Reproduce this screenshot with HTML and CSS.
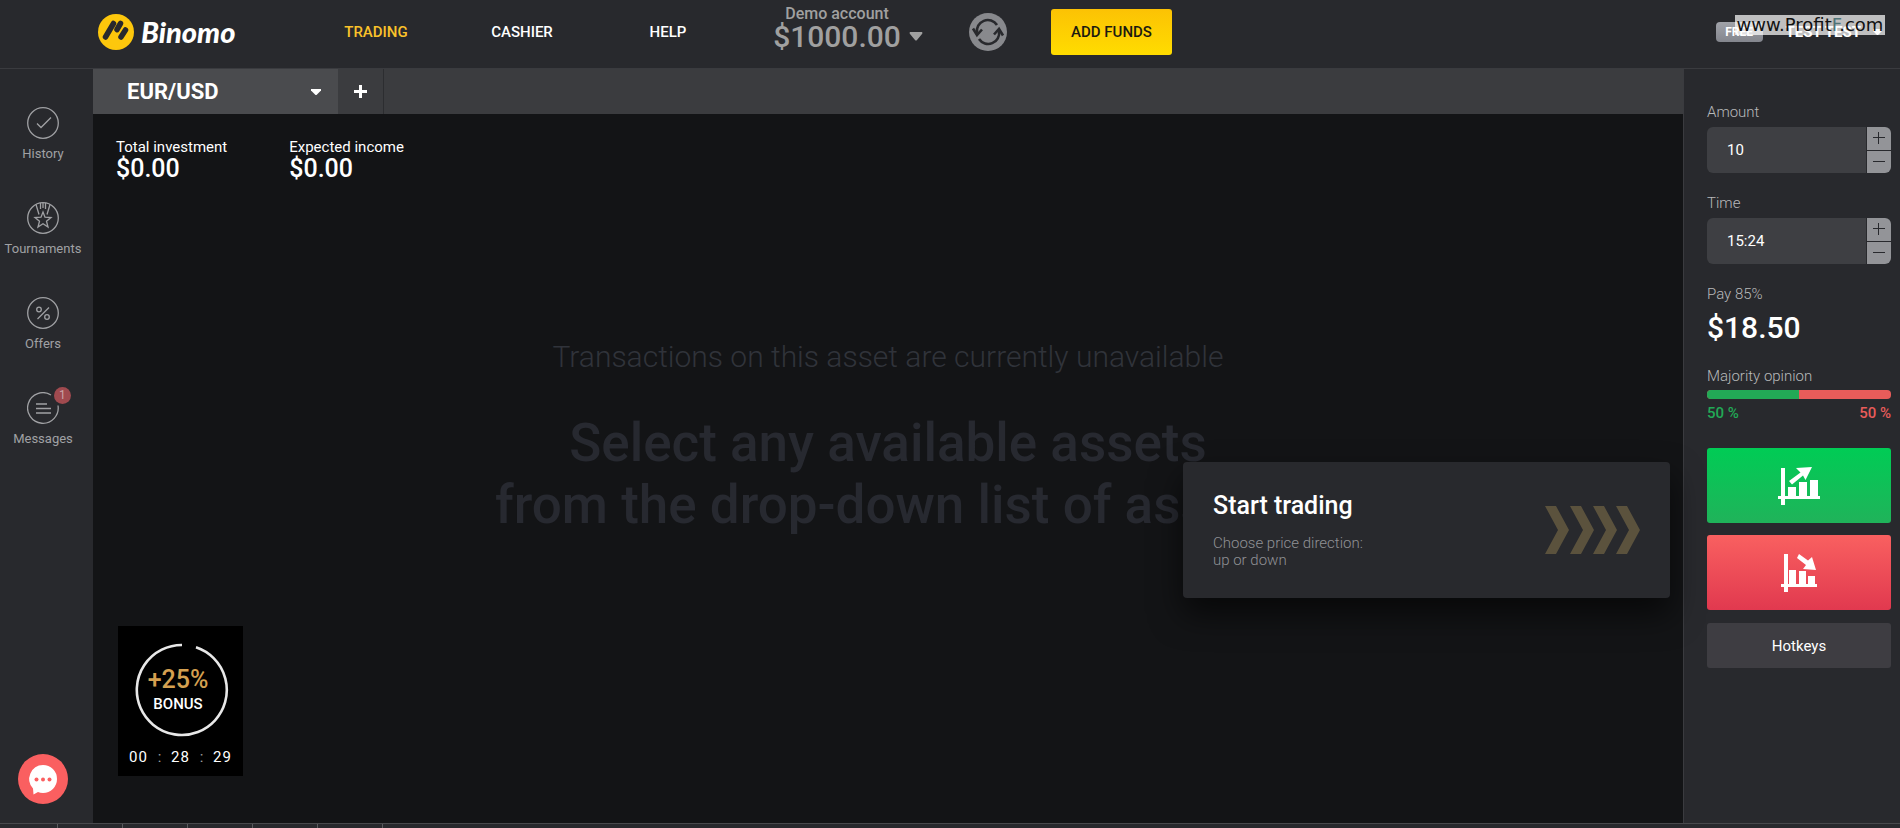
FILE: index.html
```html
<!DOCTYPE html>
<html lang="en">
<head>
    <meta charset="UTF-8">
    <meta name="viewport" content="width=device-width, initial-scale=1.0">
    <title>Binomo</title>
    <link rel="stylesheet" href="styles.css">
</head>
<body>
    <header class="header">
        <a class="logo" href="#">
            <svg width="36" height="36" viewBox="0 0 36 36">
                <circle cx="18" cy="18" r="18" fill="#fdc70c"/>
                <g stroke="#28292d" stroke-width="5.500" stroke-linecap="round">
                    <path d="M7.500 23L15.500 9.500"/>
                    <path d="M19 15.500L22.500 9.500"/>
                    <path d="M23 23L27.500 16"/>
                </g>
            </svg>
            <span>Binomo</span>
        </a>
        <nav class="nav">
            <a class="active" href="#">TRADING</a>
            <a href="#">CASHIER</a>
            <a href="#">HELP</a>
        </nav>
        <button class="account">
            <span class="account-name">Demo account</span>
            <span class="account-sum">$1000.00</span>
            <svg class="account-caret" width="14" height="9" viewBox="0 0 14 9"><path d="M1 0h12q1 1 0 2L8 8q-1 1-2 0L1 2q-1-1 0-2z" fill="#a0a0a0"/></svg>
        </button>
        <button class="sync" aria-label="Refresh balance">
            <svg width="38" height="38" viewBox="0 0 38 38">
                <circle cx="19" cy="19" r="19" fill="#88898d"/>
                <g fill="none" stroke="#28292d" stroke-width="2.600">
                    <path d="M8 20A11 11 0 0 1 28 12"/>
                    <path d="M30 18A11 11 0 0 1 10 26"/>
                    <path d="M4 15.500L8 22L13 16.500"/>
                    <path d="M34 22.500L30 16L25 21.500"/>
                </g>
            </svg>
        </button>
        <button class="add-funds">ADD FUNDS</button>
        <div class="user">
            <span class="badge">FREE</span>
            <button class="user-name">TEST TEST
                <svg width="9" height="6" viewBox="0 0 9 6"><path d="M0 0h9v2L5 6H4L0 2z" fill="#fff"/></svg>
            </button>
            <div class="watermark">www.Profit<b>F</b>.com</div>
        </div>
    </header>

    <div class="layout">
        <aside class="sidebar">
            <a class="side-item" href="#">
                <svg width="32" height="32" viewBox="0 0 32 32"><circle cx="16" cy="16" r="15.300"/><path d="M10 16.500l4 4 10-10"/></svg>
                History
            </a>
            <a class="side-item" href="#">
                <svg width="32" height="32" viewBox="0 0 32 32"><circle cx="16" cy="16" r="15.300"/><path d="M16 10l2 5.200 6 .3-4.500 3.700 1.500 5.800-5-3.300-5 3.300 1.500-5.800L8 15.500l6-.3zM9 2.500l3 10M23 2.500l-3 10M13.500 1v6M16 1v5M18.500 1v6"/></svg>
                Tournaments
            </a>
            <a class="side-item" href="#">
                <svg width="32" height="32" viewBox="0 0 32 32"><circle cx="16" cy="16" r="15.300"/><circle cx="12" cy="12.500" r="2.300"/><circle cx="20" cy="20" r="2.300"/><path d="M22 10.500L10.500 22"/></svg>
                Offers
            </a>
            <a class="side-item" href="#">
                <svg width="32" height="32" viewBox="0 0 32 32"><path d="M24 3a15.300 15.300 0 1 0 7 10.500M9 12h11M9 16.500h15M9 21h15"/></svg>
                <span class="count">1</span>
                Messages
            </a>
            <button class="chat" aria-label="Support chat">
                <svg width="50" height="50" viewBox="0 0 50 50">
                    <path d="M25 11a14 14 0 0 1 0 28q-3 0-5-1l-4.500 2.500-.5-6A14 14 0 0 1 25 11z" fill="#fff"/>
                    <g fill="#fa5f60"><circle cx="18.500" cy="25.500" r="2"/><circle cx="25" cy="25.500" r="2"/><circle cx="31.500" cy="25.500" r="2"/></g>
                </svg>
            </button>
        </aside>

        <main class="main">
            <div class="tabs">
                <button class="tab">EUR/USD
                    <svg width="10" height="6" viewBox="0 0 10 6"><path d="M0 0h10v1.500L5.500 6h-1L0 1.500z" fill="#fff"/></svg>
                </button>
                <button class="tab-add" aria-label="Add asset">
                    <svg width="13" height="13" viewBox="0 0 13 13"><path d="M5 0h3v5h5v3H8v5H5V8H0V5h5z" fill="#fff"/></svg>
                </button>
            </div>
            <div class="chart">
                <div class="stats">
                    <div class="stat">Total investment<strong>$0.00</strong></div>
                    <div class="stat">Expected income<strong>$0.00</strong></div>
                </div>
                <div class="message">
                    <p>Transactions on this asset are currently unavailable</p>
                    <h1>Select any available assets<br>from the drop-down list of assets</h1>
                </div>
                <div class="bonus">
                    <div class="ring">
                        <svg width="94" height="94" viewBox="0 0 94 94"><path d="M61 4.300A45 45 0 1 1 47 2" fill="none" stroke="#e8e8e8" stroke-width="2.600"/></svg>
                        <div class="ring-text"><span>+25%</span>BONUS</div>
                    </div>
                    <div class="timer"><span>00</span><i>:</i><span>28</span><i>:</i><span>29</span></div>
                </div>
                <div class="hint">
                    <div>
                        <h2>Start trading</h2>
                        <p>Choose price direction:<br>up or down</p>
                    </div>
                    <svg width="96" height="48" viewBox="0 0 96 48" fill="#5b523d">
                        <path d="M0 0h11l13 24-13 24H0l13-24z"/>
                        <path d="M25 0h11l13 24-13 24H25l13-24z"/>
                        <path d="M48 0h11l13 24-13 24H48l13-24z"/>
                        <path d="M71 0h11l13 24-13 24H71l13-24z"/>
                    </svg>
                </div>
            </div>
        </main>

        <aside class="deal">
            <label for="amount">Amount</label>
            <div class="field">
                <input type="text" id="amount" value="10">
                <div class="steps">
                    <button aria-label="Increase amount"><svg width="12" height="12"><path d="M0 5.500h12M5.500 0v12"/></svg></button>
                    <button aria-label="Decrease amount"><svg width="12" height="12"><path d="M0 5.500h12"/></svg></button>
                </div>
            </div>
            <label for="time">Time</label>
            <div class="field">
                <input type="text" id="time" value="15:24">
                <div class="steps">
                    <button aria-label="Increase time"><svg width="12" height="12"><path d="M0 5.500h12M5.500 0v12"/></svg></button>
                    <button aria-label="Decrease time"><svg width="12" height="12"><path d="M0 5.500h12"/></svg></button>
                </div>
            </div>
            <div class="caption">Pay 85%</div>
            <div class="payout">$18.50</div>
            <div class="caption">Majority opinion</div>
            <div class="opinion-bar"><div style="width: 50%"></div></div>
            <div class="opinion"><span class="up">50 %</span><span class="down">50 %</span></div>
            <button class="call" aria-label="Up">
                <svg width="42" height="39" viewBox="0 0 42 39" fill="#fff">
                    <path d="M3 2h4v28h35v3H7v6H3v-6H0v-3h3z"/>
                    <path d="M10 21h8v10h-8zM21 16h8v15h-8zM32 14h8v17h-8z"/>
                    <path d="M11 15L22.500 6.500 18 2l16-1-6.500 13-2.500-4.500L14 18.500z"/>
                </svg>
            </button>
            <button class="put" aria-label="Down">
                <svg width="36" height="39" viewBox="0 0 36 39" fill="#fff">
                    <path d="M3 1h4v30h29v3H7v5H3v-5H0v-3h3z"/>
                    <path d="M8 17h7v15H8zM18 18h7v14h-7zM27 23h7v9h-7z"/>
                    <path d="M18 1l9 6.500 4-3.500 4 13-13-1 3-4-9-7z"/>
                </svg>
            </button>
            <button class="hotkeys">Hotkeys</button>
        </aside>
    </div>

    <footer class="footer"><i></i><i></i><i></i><i></i><i></i><i></i></footer>
</body>
</html>
```
FILE: styles.css
```css
* {
    box-sizing: border-box;
}
body {
    margin: 0;
    min-height: 100vh;
    display: flex;
    flex-direction: column;
    background-color: #28292d;
    color: #fff;
    font-family: Roboto, sans-serif;
    font-size: 15px;
    line-height: 20px;
}
button {
    padding: 0;
    border: none;
    background: none;
    color: inherit;
    font: inherit;
    cursor: pointer;
}
a {
    color: inherit;
    text-decoration: none;
}
svg {
    display: block;
}
h1, h2, p {
    margin: 0;
}

/* header */
.header {
    display: flex;
    align-items: center;
    height: 69px;
    padding: 0 18px 5px 98px;
    border-bottom: 1px solid #3a3b3f;
}
.logo {
    display: flex;
    align-items: center;
    gap: 7px;
    width: 205px;
    font-family: Lato, sans-serif;
    font-size: 29px;
    font-weight: 900;
    font-style: italic;
}
.nav {
    display: grid;
    grid-template-columns: repeat(3, 146px);
    text-align: center;
    font-weight: 500;
}
.nav .active {
    color: #fac22a;
}
.account {
    display: grid;
    grid-template-columns: 128px 14px;
    column-gap: 8px;
    align-items: center;
    margin: 0 46px 10px 32px;
    color: #a0a0a0;
}
.account-name {
    grid-column: 1 / 3;
    width: 128px;
    font-size: 16px;
    font-weight: 500;
}
.account-sum {
    font-size: 30px;
    font-weight: 500;
    line-height: 26px;
}
.add-funds {
    width: 121px;
    height: 46px;
    margin-left: 44px;
    border-radius: 3px;
    background: linear-gradient(#fcc204, #ffdc00);
    color: #1c1a10;
    font-weight: 500;
}
.user {
    position: relative;
    display: flex;
    align-items: center;
    gap: 23px;
    margin-left: auto;
}
.badge {
    width: 47px;
    border-radius: 4px;
    background: linear-gradient(#a0a2a8, #84868e);
    font-size: 12px;
    font-weight: 700;
    text-align: center;
}
.user-name {
    display: flex;
    align-items: center;
    gap: 12px;
    font-weight: 700;
}
.watermark {
    position: absolute;
    right: -3px;
    bottom: 7px;
    width: 150px;
    background-color: rgba(255, 255, 255, 0.7);
    color: #111;
    font-family: "DejaVu Sans", sans-serif;
    font-size: 18px;
    text-align: center;
}
.watermark b {
    color: #4f7377;
    font-weight: 400;
}

.layout {
    display: flex;
    flex: 1;
}

/* left menu */
.sidebar {
    display: flex;
    flex-direction: column;
    align-items: center;
    gap: 38px;
    width: 93px;
    padding: 38px 7px 19px 0;
}
.side-item {
    position: relative;
    display: flex;
    flex-direction: column;
    align-items: center;
    gap: 5px;
    color: #a0a1a4;
    font-size: 13px;
}
.side-item svg {
    fill: none;
    stroke: #a0a1a4;
    stroke-width: 1.3;
}
.count {
    position: absolute;
    top: -5px;
    right: 2px;
    width: 17px;
    height: 17px;
    border-radius: 50%;
    background-color: #a04a4f;
    color: #c9a5a8;
    font-size: 12px;
    line-height: 17px;
    text-align: center;
}
.chat {
    margin-top: auto;
    border-radius: 50%;
    background-color: #fa5f60;
}

/* chart area */
.main {
    display: flex;
    flex-direction: column;
    flex: 1;
    background-color: #131416;
}
.tabs {
    display: flex;
    height: 45px;
    background-color: #3b3c3f;
}
.tab {
    display: flex;
    justify-content: space-between;
    align-items: center;
    width: 245px;
    padding: 0 17px 0 34px;
    background-color: #4a4b4e;
    font-size: 22px;
    font-weight: 700;
}
.tab-add {
    display: flex;
    justify-content: center;
    align-items: center;
    width: 46px;
    border-right: 1px solid #2c2d30;
}
.chart {
    position: relative;
    display: flex;
    flex-direction: column;
    flex: 1;
    padding: 23px 0 47px;
}
.stats {
    display: flex;
    gap: 62px;
    padding-left: 23px;
}
.stat strong {
    display: block;
    font-size: 25px;
    font-weight: 500;
    line-height: 24px;
}
.message {
    margin-top: 156px;
    text-align: center;
    color: #30333a;
}
.message p {
    font-size: 30px;
    font-weight: 300;
    line-height: 40px;
}
.message h1 {
    margin-top: 35px;
    color: #272930;
    font-size: 53px;
    font-weight: 500;
    line-height: 62px;
}
.bonus {
    width: 125px;
    height: 150px;
    margin: auto 0 0 25px;
    padding: 17px 11px 0;
    background-color: #000;
}
.ring {
    position: relative;
    width: 94px;
    margin-left: 6px;
}
.ring-text {
    position: absolute;
    top: 25px;
    left: 0;
    width: 86px;
    font-weight: 500;
    text-align: center;
}
.ring-text span {
    display: block;
    margin-bottom: 2px;
    color: #d5a050;
    font-size: 25px;
    line-height: 24px;
}
.timer {
    display: flex;
    justify-content: space-between;
    margin-top: 10px;
}
.timer span {
    letter-spacing: 1px;
}
.timer i {
    color: #a0a0a0;
    font-style: normal;
}
.hint {
    position: absolute;
    right: 13px;
    bottom: 225px;
    display: flex;
    justify-content: space-between;
    align-items: center;
    width: 487px;
    height: 136px;
    padding: 0 29px 0 30px;
    border-radius: 4px;
    background-color: #28292d;
    box-shadow: 0 16px 32px rgba(0, 0, 0, 0.6);
}
.hint h2 {
    font-size: 25px;
    font-weight: 500;
    line-height: 28px;
}
.hint p {
    margin-top: 15px;
    color: #909195;
    font-weight: 300;
    line-height: 17px;
}

/* deal panel */
.deal {
    display: flex;
    flex-direction: column;
    width: 217px;
    padding: 33px 9px 33px 23px;
    border-left: 1px solid #3a3b3f;
}
.deal label, .caption {
    color: #b8b9bb;
    font-weight: 300;
}
.field {
    display: flex;
    gap: 1px;
    height: 46px;
    margin: 5px 0 20px;
}
.field input {
    flex: 1;
    min-width: 0;
    padding: 0 20px;
    border: none;
    border-radius: 6px 0 0 6px;
    background-color: #3e3f43;
    color: #fff;
    font: inherit;
}
.steps {
    display: flex;
    flex-direction: column;
    gap: 1px;
    width: 24px;
}
.steps button {
    display: flex;
    flex: 1;
    justify-content: center;
    align-items: center;
    background-color: #939498;
}
.steps button:first-child {
    border-top-right-radius: 6px;
}
.steps button:last-child {
    border-bottom-right-radius: 6px;
}
.steps svg {
    stroke: #28292d;
}
.payout {
    margin: 6px 0 20px;
    font-size: 30px;
    font-weight: 500;
    line-height: 36px;
}
.opinion-bar {
    height: 9px;
    margin: 4px 0;
    border-radius: 4px;
    background-color: #e85c5a;
    overflow: hidden;
}
.opinion-bar div {
    height: 100%;
    background-color: #22a956;
}
.opinion {
    display: flex;
    justify-content: space-between;
    font-weight: 500;
}
.up {
    color: #22a956;
}
.down {
    color: #e85c5a;
}
.call, .put {
    display: flex;
    justify-content: center;
    align-items: center;
    height: 75px;
    margin-top: 25px;
    border-radius: 3px;
    background: linear-gradient(#00cc55, #20b35a);
}
.put {
    margin-top: 12px;
    background: linear-gradient(#f96060, #e1394f);
}
.hotkeys {
    height: 45px;
    margin-top: 13px;
    border-radius: 3px;
    background-color: #3e3d42;
}

.footer {
    display: flex;
    gap: 64px;
    height: 5px;
    padding-left: 57px;
    border-top: 1px solid #48494c;
}
.footer i {
    width: 1px;
    background-color: #5a5b5e;
}
```
